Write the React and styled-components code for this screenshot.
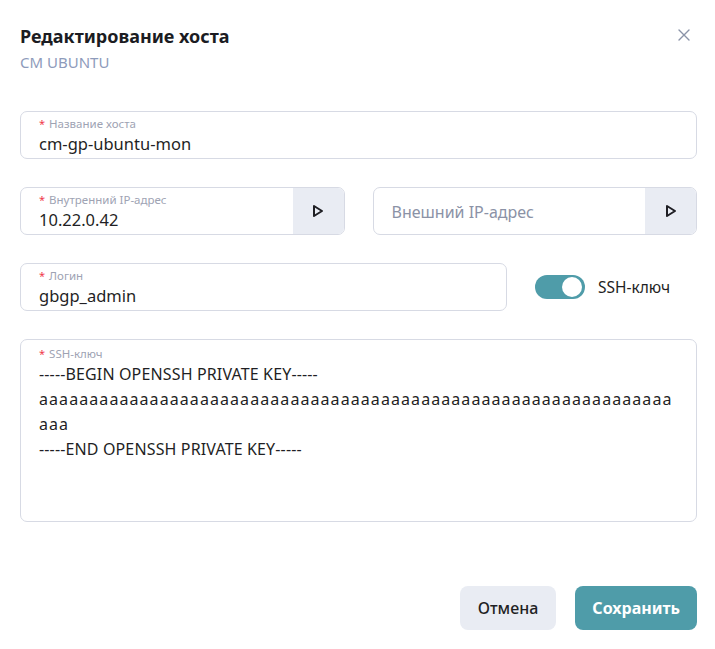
import React from 'react';
import styled, { createGlobalStyle } from 'styled-components';

const Global = createGlobalStyle`
  html, body {
    margin: 0;
    padding: 0;
    background: #ffffff;
  }
  body {
    font-family: 'Noto Sans', 'Open Sans', sans-serif;
    color: #1f1f24;
  }
`

const Modal = styled.div`
  position: relative;
  width: 715px;
  height: 649px;
  box-sizing: border-box;
  padding: 24px 18px 0 20px;
  display: flex;
  flex-direction: column;
`

const Title = styled.h2`
  margin: 0;
  font-size: 18px;
  line-height: 24px;
  font-weight: 700;
  color: #1b1c22;
`

const Subtitle = styled.div`
  margin-top: 4px;
  font-size: 15px;
  line-height: 20px;
  color: #8e9bbb;
`

const Close = styled.button`
  position: absolute;
  top: 28px;
  right: 24px;
  width: 14px;
  height: 14px;
  padding: 0;
  border: none;
  background: none;
  display: flex;
  align-items: center;
  justify-content: center;
`

const Form = styled.div`
  margin-top: 39px;
  display: flex;
  flex-direction: column;
  gap: 28px;
`

const Row = styled.div`
  display: flex;
  align-items: center;
  gap: 28px;
`

const Field = styled.div`
  flex: ${p => p.$grow ? '1 1 0' : 'none'};
  display: flex;
  height: ${p => p.$tall ? '183px' : '48px'};
  box-sizing: border-box;
  border: 1px solid #d7dae4;
  border-radius: 7px;
  overflow: hidden;
  background: #fff;
`

const FieldBody = styled.div`
  flex: 1;
  display: flex;
  flex-direction: column;
  gap: 1px;
  justify-content: ${p => p.$center ? 'center' : 'flex-start'};
  padding: ${p => p.$tall ? '6px 18px' : '4px 18px 3px'};
`

const Label = styled.div`
  font-size: 11.5px;
  line-height: 15px;
  color: #9ea3b3;
`

const Star = styled.span`
  color: #f03a4b;
  margin-right: 4px;
  font-size: 11px;
`

const Value = styled.div`
  font-size: 16.5px;
  line-height: 23px;
  color: #1f1f24;
`

const Placeholder = styled.div`
  font-size: 16px;
  line-height: 22px;
  color: #8b92a6;
`

const KeyText = styled.div`
  font-size: 16px;
  line-height: 25px;
  color: #1f1f24;
`

const KeyLine = styled.div`
  letter-spacing: ${p => p.$spacing || '0.14px'};
  white-space: nowrap;
`

const SideButton = styled.button`
  width: 51px;
  flex-shrink: 0;
  border: none;
  background: #e9ecf3;
  display: flex;
  align-items: center;
  justify-content: center;
  padding: 0;
`

const ToggleWrap = styled.label`
  display: flex;
  align-items: center;
  gap: 13px;
  width: 162px;
  font-size: 15.5px;
  color: #1f1f24;
`

const Track = styled.span`
  width: 50px;
  height: 24px;
  border-radius: 12px;
  background: #4f9ca9;
  position: relative;
  flex-shrink: 0;
`

const Knob = styled.span`
  position: absolute;
  top: 2px;
  right: 3px;
  width: 20px;
  height: 20px;
  border-radius: 50%;
  background: #fff;
`

const Footer = styled.div`
  margin-top: 64px;
  display: flex;
  justify-content: flex-end;
  gap: 19px;
`

const Btn = styled.button`
  height: 44px;
  padding: 0 ${p => p.$primary ? '17px' : '18px'};
  border: none;
  border-radius: 8px;
  font-family: inherit;
  font-size: 16px;
  font-weight: ${p => p.$primary ? 700 : 500};
  background: ${p => p.$primary ? '#4f9ca9' : '#e9ecf3'};
  color: ${p => p.$primary ? '#ffffff' : '#1f1f24'};
`

const Play = () => (
  <svg width="12" height="14" viewBox="0 0 12 14">
    <path d="M2 2 L10 7 L2 12 Z" fill="none" stroke="#1f1f24" strokeWidth="2" strokeLinejoin="round" />
  </svg>
)

export default function App() {
  return (
    <>
      <Global />
      <Modal>
        <Title>Редактирование хоста</Title>
        <Subtitle>CM UBUNTU</Subtitle>
        <Close aria-label="close">
          <svg width="12" height="12" viewBox="0 0 12 12">
            <path d="M1 1 L11 11 M11 1 L1 11" stroke="#8a93a8" strokeWidth="1.4" strokeLinecap="round" />
          </svg>
        </Close>
        <Form>
          <Field>
            <FieldBody>
              <Label><Star>*</Star>Название хоста</Label>
              <Value>cm-gp-ubuntu-mon</Value>
            </FieldBody>
          </Field>
          <Row>
            <Field $grow>
              <FieldBody>
                <Label><Star>*</Star>Внутренний IP-адрес</Label>
                <Value>10.22.0.42</Value>
              </FieldBody>
              <SideButton><Play /></SideButton>
            </Field>
            <Field $grow>
              <FieldBody $center>
                <Placeholder>Внешний IP-адрес</Placeholder>
              </FieldBody>
              <SideButton><Play /></SideButton>
            </Field>
          </Row>
          <Row>
            <Field $grow>
              <FieldBody>
                <Label><Star>*</Star>Логин</Label>
                <Value>gbgp_admin</Value>
              </FieldBody>
            </Field>
            <ToggleWrap>
              <Track><Knob /></Track>
              SSH-ключ
            </ToggleWrap>
          </Row>
          <Field $tall>
            <FieldBody $tall>
              <Label><Star>*</Star>SSH-ключ</Label>
              <KeyText>
                <KeyLine>-----BEGIN OPENSSH PRIVATE KEY-----</KeyLine>
                <KeyLine $spacing="1.08px">{'a'.repeat(63)}</KeyLine>
                <KeyLine $spacing="1.08px">aaa</KeyLine>
                <KeyLine>-----END OPENSSH PRIVATE KEY-----</KeyLine>
              </KeyText>
            </FieldBody>
          </Field>
        </Form>
        <Footer>
          <Btn>Отмена</Btn>
          <Btn $primary>Сохранить</Btn>
        </Footer>
      </Modal>
    </>
  );
}
